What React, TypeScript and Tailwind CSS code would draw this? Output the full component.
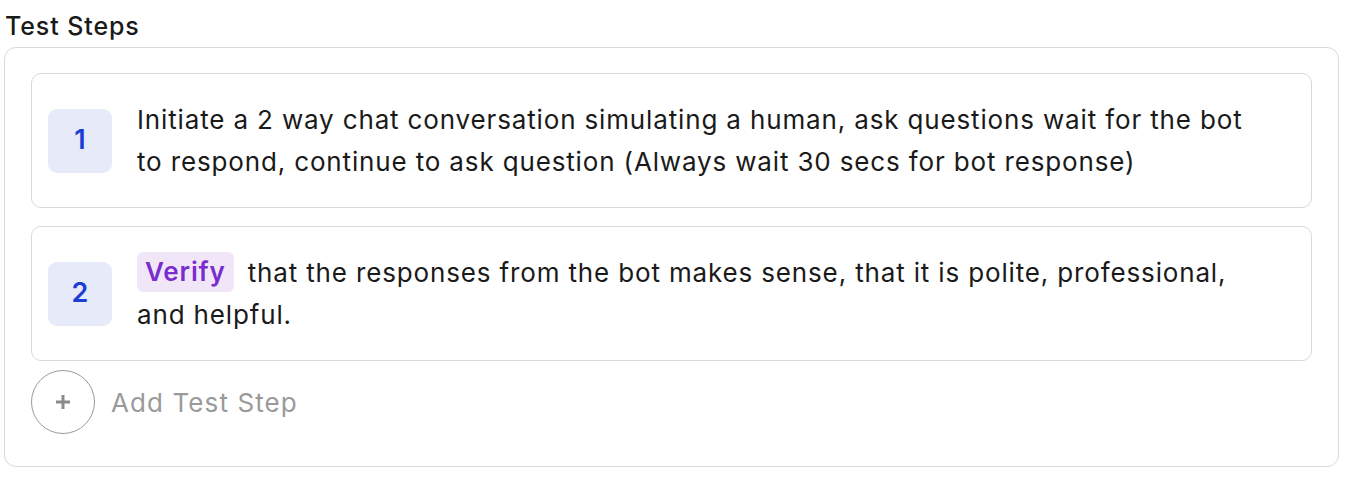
import React from 'react';

const STEPS = [
  {
    id: 1,
    text: 'Initiate a 2 way chat conversation simulating a human, ask questions wait for the bot to respond, continue to ask question (Always wait 30 secs for bot response)',
  },
  {
    id: 2,
    badge: 'Verify',
    text: 'that the responses from the bot makes sense, that it is polite, professional, and helpful.',
  },
];

export default function App() {
  return (
    <div className="bg-white w-[1352px] h-[484px] pt-[10px] pl-[4px] pr-[13px] text-[#1a1a1a]" style={{ fontFamily: 'Inter, "Noto Sans", sans-serif' }}>
      {/* Header */}
      <h2 className="pl-[1px] text-[25px] leading-[32px] font-medium tracking-[0.9px] mb-[5px]">Test Steps</h2>

      {/* Steps box */}
      <div className="border-[1.5px] border-[#dcd8d4] rounded-[12px] px-[26px] pt-[25px] pb-[32px]">
        <div className="flex flex-col gap-[18px]">
          {STEPS.map((step) => (
            <div
              key={step.id}
              className="border-[1.5px] border-[#dcd8d4] rounded-[10px] min-h-[135px] pl-[16px] pr-[40px] py-[24px] flex items-center gap-[25px]"
            >
              <div className="w-[64px] h-[64px] shrink-0 rounded-[9px] bg-[#e7eaf8] flex items-center justify-center text-[27px] font-semibold text-[#1b3ed6]">
                {step.id}
              </div>
              <div className="text-[26px] leading-[42px] tracking-[0.85px]">
                {step.badge && (
                  <span className="inline-block align-middle bg-[#f1e6f8] text-[#7a2dcf] font-semibold rounded-[6px] px-[8px] leading-[40px] mr-[14px] -mt-[4px]">
                    {step.badge}
                  </span>
                )}
                <span>{step.text}</span>
              </div>
            </div>
          ))}
        </div>

        {/* Add step */}
        <div className="mt-[9px] flex items-center gap-[16px]">
          <div className="w-[64px] h-[64px] rounded-full border-[1.5px] border-[#9b9b9b] flex items-center justify-center">
            <svg width="18" height="18" viewBox="0 0 18 18">
              <path d="M9 2v14M2 9h14" stroke="#8a8a8a" strokeWidth="3" />
            </svg>
          </div>
          <span className="text-[26px] tracking-[1.1px] text-[#9a9a9a]">Add Test Step</span>
        </div>
      </div>
    </div>
  );
}
